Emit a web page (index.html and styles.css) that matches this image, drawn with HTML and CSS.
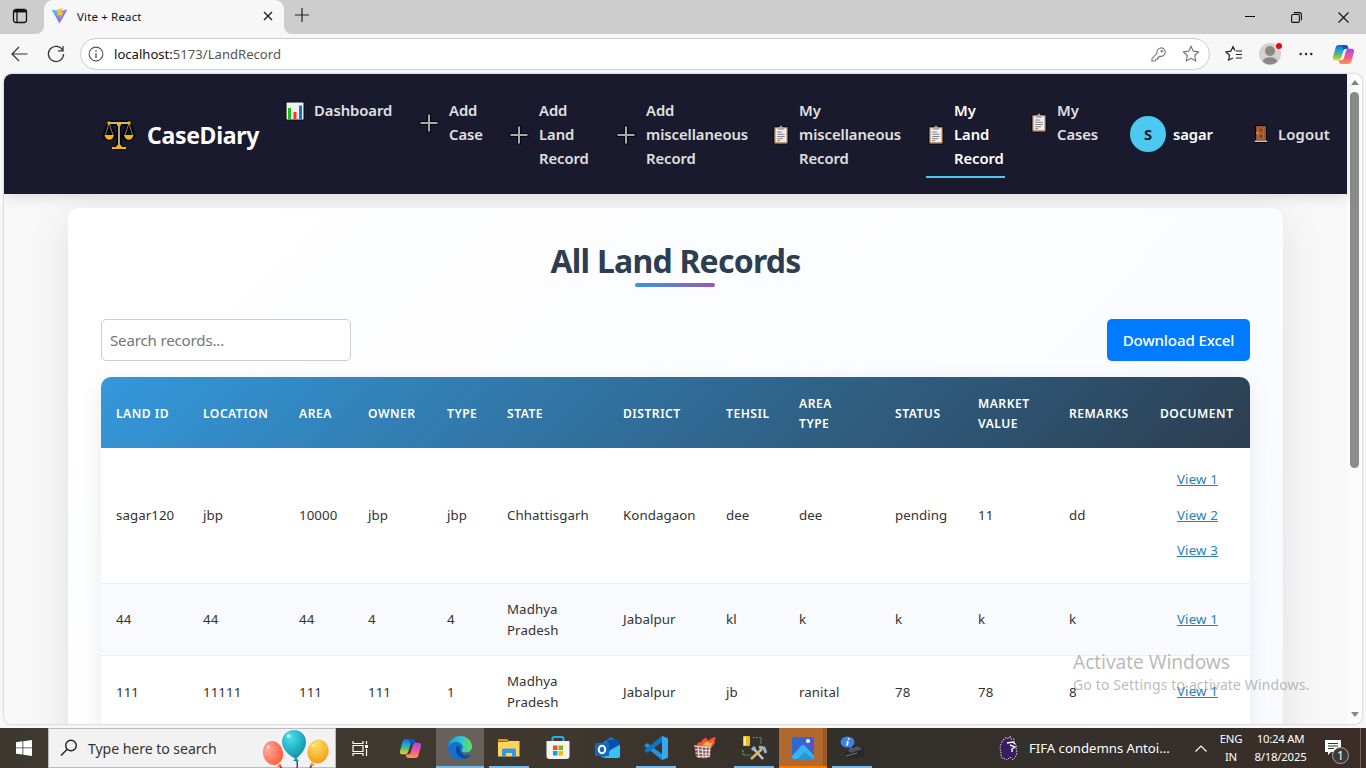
FILE: index.html
```html
<!DOCTYPE html>
<html lang="en">
<head>
<meta charset="utf-8">
<title>Vite + React</title>
<link rel="stylesheet" href="styles.css">
</head>
<body>
<svg width="0" height="0" class="defs">
  <defs>
    <linearGradient id="cpA" x1="0" y1="0" x2="0" y2="1"><stop offset="0" stop-color="#1b62e0"/><stop offset=".35" stop-color="#18a5d8"/><stop offset=".65" stop-color="#5fbf6a"/><stop offset="1" stop-color="#f4d21f"/></linearGradient>
    <linearGradient id="cpB" x1="0" y1="0" x2="0" y2="1"><stop offset="0" stop-color="#a04af0"/><stop offset=".5" stop-color="#f0559a"/><stop offset="1" stop-color="#fb9a45"/></linearGradient>
    <linearGradient id="vt" x1="0" y1="0" x2="1" y2="1"><stop offset="0" stop-color="#41d1ff"/><stop offset="1" stop-color="#bd34fe"/></linearGradient>
    <linearGradient id="edA" x1="0" y1="0" x2="1" y2="0"><stop offset="0" stop-color="#1b9de2"/><stop offset=".55" stop-color="#2fc6cf"/><stop offset="1" stop-color="#6be04f"/></linearGradient>
    <linearGradient id="ph" x1="0" y1="0" x2="1" y2="1"><stop offset="0" stop-color="#1b6fd6"/><stop offset="1" stop-color="#6a4fc4"/></linearGradient>
    <radialGradient id="bR" cx=".3" cy=".3" r=".8"><stop offset="0" stop-color="#ffa9a0"/><stop offset="1" stop-color="#ff5a35"/></radialGradient>
    <radialGradient id="bT" cx=".35" cy=".25" r=".8"><stop offset="0" stop-color="#4be0ee"/><stop offset="1" stop-color="#0a8fa4"/></radialGradient>
    <radialGradient id="bY" cx=".35" cy=".25" r=".8"><stop offset="0" stop-color="#ffe060"/><stop offset="1" stop-color="#f39a1d"/></radialGradient>
    <symbol id="copilot" viewBox="0 0 24 22">
      <path d="M5 1.500Q5.500 1 7 1h7q2 0 2.600 2l.6 2h-2.500q-2.200 0-2.900 2.300L9.600 14.500Q8.800 17 6.500 17H4Q.2 17 1 13.500L3.600 4.200Q4 2.300 5 1.500z" fill="url(#cpA)"/>
      <path d="M7 1h7q2 0 2.600 2l.6 2h-2.500Q13 5 12 6.500L10.800 3Q10 1 7 1z" fill="#1650c8"/>
      <path d="M19 20.500q-.5.500-2 .5h-7q-2 0-2.600-2L6.800 17h2.700q2.200 0 2.900-2.300l2-7.200Q15.200 5 17.500 5H20q3.800 0 3 3.500l-2.600 9.300q-.4 1.900-1.400 2.700z" fill="url(#cpB)"/>
    </symbol>
    <symbol id="plus" viewBox="0 0 20 20"><path d="M10 .500v19M.5 10h19" stroke="#06060c" stroke-width="4.200"/><path d="M10 1.500v17M1.500 10h17" stroke="#aaa" stroke-width="2"/></symbol>
    <symbol id="clip" viewBox="0 0 16 20"><rect x=".4" y="1.200" width="15.200" height="18.300" rx="1.500" fill="#08080c"/><rect x="1.200" y="2" width="13.600" height="16.700" rx="1" fill="#a97848"/><path d="M2.500 3.200h11v14h-11z" fill="#f1f1f3"/><path d="M5 2.200h1.600Q7 .4 8 .4t1.400 1.800H11v2.600H5z" fill="#aaa6a2"/><path d="M4.200 7h5M4.200 9.300h7.500M4.200 11.500h7.500M4.200 13.700h6M4.200 15.700h3" stroke="#77777b" stroke-width=".9"/></symbol>
  </defs>
</svg>

<div class="tabs">
  <div class="tabs-menu"><svg width="16" height="16" viewBox="0 0 16 16" fill="none" stroke="#111" stroke-width="1.300"><rect x="1.500" y="1.500" width="13" height="13" rx="2.500"/><path d="M2 3.200h12" stroke-width="2.500"/><path d="M5 4v10"/></svg></div>
  <div class="tab">
    <svg width="17" height="16" viewBox="0 0 17 16"><path d="M.5 1.500L8.500 15.500 16.500 1.500 8.700 3z" fill="url(#vt)"/><path d="M6.200 1.200l5.600-1-1.600 4.300 2.200-.3-3.600 6.600.5-3.800-2.800.5z" fill="#ffc51f"/></svg>
    <span>Vite + React</span>
    <svg class="tab-x" width="10" height="10" viewBox="0 0 10 10" stroke="#222" stroke-width="1.400"><path d="M1 1l8 8M9 1L1 9"/></svg>
  </div>
  <svg class="tab-new" width="14" height="14" viewBox="0 0 14 14" stroke="#222" stroke-width="1.200"><path d="M7 0v14M0 7h14"/></svg>
  <div class="win">
    <svg width="10" height="10" viewBox="0 0 10 10"><path d="M0 4.500h10" stroke="#000"/></svg>
    <svg width="11" height="11" viewBox="0 0 11 11" fill="none" stroke="#111" stroke-width="1.100"><rect x=".6" y="2.500" width="7.800" height="7.900" rx="1.200"/><path d="M2.800.6h5.500q2.100 0 2.100 2.100v5.500"/></svg>
    <svg width="11" height="11" viewBox="0 0 11 11" stroke="#111" stroke-width="1.100"><path d="M.5.500l10 10M10.500.500l-10 10"/></svg>
  </div>
</div>

<div class="toolbar">
  <svg class="back" width="17" height="16" viewBox="0 0 17 16" fill="none" stroke="#333" stroke-width="1.200"><path d="M8 1L1 8l7 7M1 8h15.500"/></svg>
  <svg class="reload" width="18" height="18" viewBox="0 0 18 18" fill="none" stroke="#333" stroke-width="1.300"><path d="M15.800 5.500A7.600 7.600 0 1 0 16.600 9M16 1v4.800h-5"/></svg>
  <div class="address">
    <svg width="16" height="16" viewBox="0 0 16 16" fill="none" stroke="#555" stroke-width="1.100"><circle cx="8" cy="8" r="6.900"/><path d="M8 7.200V12M8 4.300v1.400" stroke-width="1.400"/></svg>
    <span class="url">localhost:<b>5173/LandRecord</b></span>
    <svg class="key" width="15" height="15" viewBox="0 0 15 15" fill="none" stroke="#777" stroke-width="1.100"><path d="M6 6.300A4.200 4.200 0 1 1 9 9.200L7.800 9.800V11H6.500v1.300H5L4 14H1v-2.600z"/><circle cx="10.800" cy="4.200" r=".7"/></svg>
    <svg class="star" width="18" height="18" viewBox="0 0 18 18" fill="none" stroke="#777" stroke-width="1.200" stroke-linejoin="round"><path d="M9 1.200l2.300 5 5.400.6-4 3.700 1.100 5.500L9 13.300 4.200 16l1.100-5.500-4-3.700 5.400-.6z"/></svg>
  </div>
  <svg class="favs" width="18" height="18" viewBox="0 0 18 18" fill="none" stroke="#222" stroke-width="1.200"><path d="M10 5.800L8 1.700 5.800 6.200 1 7l3.500 3.300L3.600 15 8 13M11 6h6M11 9.500h6M11 13h6"/></svg>
  <div class="profile"><svg width="22" height="22" viewBox="0 0 22 22"><circle cx="11" cy="11" r="11" fill="#d4d1ce"/><circle cx="11" cy="8" r="5" fill="#8a8785"/><path d="M3.500 18.600Q5 14.300 11 14.300t7.500 4.300A11 11 0 0 1 3.500 18.600z" fill="#8a8785"/></svg><i></i></div>
  <svg class="dots" width="14" height="4" viewBox="0 0 14 4" fill="#222"><circle cx="1.700" cy="2" r="1.200"/><circle cx="7" cy="2" r="1.200"/><circle cx="12.300" cy="2" r="1.200"/></svg>
  <svg class="cp" width="23" height="21"><use href="#copilot"/></svg>
</div>

<div class="viewport">
  <div class="page">
    <nav class="nav">
      <div class="brand">
        <svg width="32" height="32" viewBox="0 0 32 32"><g fill="none" stroke="#050508" stroke-width="5" stroke-linejoin="round"><path d="M5 4h22M16 3v25M6 5L2 17h9L6 5M26 5l-5 12h9L26 5M11 29h10"/><path d="M2 17q4 5 9 0M21 17q4 5 9 0"/></g><path d="M16 3v24M6 4h20" stroke="#c5b79c" stroke-width="1.800"/><path d="M6 4L2.500 16M6 4l4 12M26 4l-4 12M26 4l3.500 12" stroke="#999" stroke-width=".8"/><g fill="#fbb300"><path d="M1.500 16h9.500q-1 4.700-4.700 4.700T1.500 16zM21 16h9.500q-1 4.700-4.700 4.700T21 16zM9 30v-2h4q.5-2.500 3-2.500t3 2.500h4v2z"/><circle cx="16" cy="5" r="2.200"/><circle cx="6" cy="4" r="1.700"/><circle cx="26" cy="4" r="1.700"/></g></svg>
        <span>CaseDiary</span>
      </div>
      <div class="menu">
        <a class="item"><svg width="20" height="20" viewBox="0 0 20 20"><rect x=".5" y=".5" width="19" height="19" fill="#08080c"/><rect x="1.500" y="1.500" width="17" height="17" fill="#eef0f2"/><path d="M3 7h3v11H3z" fill="#17c01b"/><path d="M8.500 11h3v7h-3z" fill="#f23a20"/><path d="M14 4.500h3V18h-3z" fill="#1474d4"/></svg><span>Dashboard</span></a>
        <a class="item add"><svg width="20" height="20"><use href="#plus"/></svg><span>Add<br>Case</span></a>
        <a class="item add"><svg width="20" height="20"><use href="#plus"/></svg><span>Add<br>Land<br>Record</span></a>
        <a class="item add"><svg width="20" height="20"><use href="#plus"/></svg><span>Add<br>miscellaneous<br>Record</span></a>
        <a class="item clip"><svg width="16" height="20"><use href="#clip"/></svg><span>My<br>miscellaneous<br>Record</span></a>
        <a class="item clip active"><svg width="16" height="20"><use href="#clip"/></svg><span>My<br>Land<br>Record</span></a>
        <a class="item clip"><svg width="16" height="20"><use href="#clip"/></svg><span>My<br>Cases</span></a>
      </div>
      <div class="user"><div class="avatar">S</div><span>sagar</span></div>
      <div class="logout"><svg width="14" height="18" viewBox="0 0 14 18"><path d="M1 0h12v18H1z" fill="#08080c"/><path d="M2 1h10v14.500H2z" fill="#9a532b"/><path d="M4.500 3h5v4h-5zM4.500 9h5v4.500h-5z" fill="#874722" stroke="#bf7a48" stroke-width=".8"/><circle cx="3.500" cy="8" r=".9" fill="#f2c01f"/><path d="M.8 15.500h12.400V17H.8z" fill="#c8c8c8"/></svg><span>Logout</span></div>
    </nav>
    <main class="card">
      <h1>All Land Records</h1>
      <div class="tools"><input class="search" placeholder="Search records..."><button class="download">Download Excel</button></div>
      <table class="records">
        <colgroup><col class="c1"><col class="c2"><col class="c3"><col class="c4"><col class="c5"><col class="c6"><col class="c7"><col class="c8"><col class="c9"><col class="c10"><col class="c11"><col class="c12"><col class="c13"></colgroup>
        <thead><tr><th>LAND ID</th><th>LOCATION</th><th>AREA</th><th>OWNER</th><th>TYPE</th><th>STATE</th><th>DISTRICT</th><th>TEHSIL</th><th>AREA<br>TYPE</th><th>STATUS</th><th>MARKET<br>VALUE</th><th>REMARKS</th><th>DOCUMENT</th></tr></thead>
        <tbody>
          <tr class="tall"><td>sagar120</td><td>jbp</td><td>10000</td><td>jbp</td><td>jbp</td><td>Chhattisgarh</td><td>Kondagaon</td><td>dee</td><td>dee</td><td>pending</td><td>11</td><td>dd</td><td class="docs"><a>View 1</a><a>View 2</a><a>View 3</a></td></tr>
          <tr class="even"><td>44</td><td>44</td><td>44</td><td>4</td><td>4</td><td>Madhya<br>Pradesh</td><td>Jabalpur</td><td>kl</td><td>k</td><td>k</td><td>k</td><td>k</td><td class="docs"><a>View 1</a></td></tr>
          <tr class="last"><td>111</td><td>11111</td><td>111</td><td>111</td><td>1</td><td>Madhya<br>Pradesh</td><td>Jabalpur</td><td>jb</td><td>ranital</td><td>78</td><td>78</td><td>8</td><td class="docs"><a>View 1</a></td></tr>
        </tbody>
      </table>
    </main>
  </div>
  <div class="scroll"><i class="up"></i><i class="thumb"></i><i class="down"></i></div>
</div>

<div class="watermark"><div class="wm1">Activate Windows</div><div class="wm2">Go to Settings to activate Windows.</div></div>

<div class="taskbar">
  <div class="start"><svg width="16" height="16" viewBox="0 0 16 16" fill="#fff"><path d="M0 2.200l6.500-.9v6.200H0zM7.300 1.200L16 0v7.500H7.300zM0 8.300h6.500v6.300L0 13.700zM7.300 8.300H16V16l-8.700-1.300z"/></svg></div>
  <div class="find">
    <svg width="18" height="18" viewBox="0 0 18 18" fill="none" stroke="#222" stroke-width="1.400"><circle cx="11" cy="6.500" r="5.300"/><path d="M7.200 10.300L1 16.500"/></svg>
    <span>Type here to search</span>
    <svg class="balloons" width="68" height="39" viewBox="0 0 68 39"><g fill="none" stroke="#33207a" stroke-width="1.300"><path d="M17.500 36l2 3M34 30q2 4 1 9M50 35q0 2-2 4"/></g><ellipse cx="11" cy="24" rx="10" ry="12" fill="url(#bR)" transform="rotate(-14 11 24)"/><path d="M15 38l3-3.500 2 3z" fill="#ff5a35"/><path d="M32 1c7 0 12 5 12 12 0 8-6 13-10 17C28 27 20 21 20 13 20 6 25 1 32 1z" fill="url(#bT)"/><path d="M31 32l3-3 3 3z" fill="#0a8fa4"/><ellipse cx="56" cy="22.500" rx="10.500" ry="12" fill="url(#bY)" transform="rotate(16 56 22.500)"/><path d="M47 37l3-4 3 3.500z" fill="#f39a1d"/><g fill="#fff" opacity=".6"><circle cx="6.500" cy="18" r="1.800"/><circle cx="26.500" cy="7" r="2"/><circle cx="51" cy="16.500" r="1.700"/></g></svg>
  </div>
  <div class="apps">
    <div class="app"><svg width="17" height="17" viewBox="0 0 17 17" fill="none" stroke="#fff" stroke-width="1.200"><path d="M1 1v2.500h10V1M1 16v-2.500h10V16M1 5.500h10v6H1zM14.500 1v3M14.500 9v7"/><path d="M13 5h3v3h-3z" fill="#fff" stroke="none"/></svg></div>
    <div class="app copi"><svg width="23" height="21"><use href="#copilot"/></svg></div>
    <div class="app on blue"><svg width="24" height="24" viewBox="0 0 24 24"><circle cx="12" cy="12" r="12" fill="#1470c8"/><path d="M0 11C1 4 6 0 12 0c7 0 12 5 12 10.500 0 4-3 6-6.500 6-2.500 0-4-1-4-2 0-.8 1.200-1.200 1.200-3.300C14.700 8 11 6 8 6 4 6 1 8.500 0 11z" fill="url(#edA)"/><path d="M9 10c-3 5 1 12 7.500 12.500 2.500.2 5-2 6.500-4.500-3.500 2-10.500 1.500-11-4.500-.1-1 .3-2 .3-2S10 9.500 9 10z" fill="#0c4a9a"/><path d="M15.500 16.400q5 1.300 8.500-1.200l-1 2.800q-4 2.500-8 1z" fill="#66615b"/></svg></div>
    <div class="app blue line"><svg width="22" height="18" viewBox="0 0 22 18"><path d="M0 1q0-1 1-1h8l2 2.500H0z" fill="#dd9a0a"/><path d="M0 3h9l2-1h10.500v15.500H0z" fill="#ffd45e"/><path d="M4 18v-7q0-1.500 1.500-1.500h11Q18 9.500 18 11v7h-4v-4H8v4z" fill="#3a96dd"/></svg></div>
    <div class="app"><svg width="24" height="24" viewBox="0 0 24 24"><path d="M6.500 6V2.500Q6.500 1 8 1h8q1.500 0 1.500 1.500V6" fill="none" stroke="#1ab0e8" stroke-width="2"/><path d="M.5 5h23v15q0 3-3 3h-17q-3 0-3-3z" fill="#f3f3f3"/><path d="M7 9.500h4.500V14H7z" fill="#f25022"/><path d="M12.500 9.500H17V14h-4.500z" fill="#7fba00"/><path d="M7 15h4.500v4.500H7z" fill="#00a4ef"/><path d="M12.500 15H17v4.500h-4.500z" fill="#ffb900"/></svg></div>
    <div class="app"><svg width="25" height="22" viewBox="0 0 25 22"><path d="M6 7l9-6.500q1-.7 2 0L25 7v12q0 2-2 2H8q-2 0-2-2z" fill="#1282d8"/><path d="M12 3l10-1 3 5-12 7z" fill="#0c4dab"/><path d="M25 8v11q0 2-2 2H9l7-8z" fill="#3bc0f3"/><path d="M0 6h14v13H0z" fill="#0f68c6"/><ellipse cx="7" cy="12.500" rx="3.200" ry="3.700" fill="none" stroke="#fff" stroke-width="2"/></svg></div>
    <div class="app blue line"><svg width="24" height="24" viewBox="0 0 24 24"><path d="M18 0l6 2.500v19L18 24 0 9.500 3 7l15 11V0z" fill="#2490df"/><path d="M18 6L3 17 0 14.500 18 0z" fill="#0877c4"/><path d="M18 0l6 2.500v19L18 24z" fill="#35a8f3"/></svg></div>
    <div class="app"><svg width="24" height="24" viewBox="0 0 24 24"><path d="M3 12Q4 5 8 6q2-4 6-4-1 3 2 2 3-3 7-3-2 4-1 6-3 3-5 8z" fill="#f4512c"/><path d="M8 11q4-6 8-5-1 3 4-1-1 5-5 8z" fill="#ffb340"/><path d="M1 9l17 1-1 11q-6 3-14 0z" fill="#a5504a"/><path d="M1 10l17 1M2 13.500l15.500 1M2.500 17l15 1M4 20.500h13M5 10l1 12M9 10l1 12M13 10v12M16.500 11l-.5 10" stroke="#ddd" stroke-width="1.200"/></svg></div>
    <div class="app blue line"><svg width="26" height="24" viewBox="0 0 26 24"><path d="M12 1.500h8v6M2 14v5h8" fill="none" stroke="#45b43d" stroke-width="1.200" stroke-dasharray="2 1"/><rect x="2" y="0" width="7" height="10" rx="1" fill="#edbe22"/><path d="M3 1h2v8H3z" fill="#fff0a0"/><path d="M12 12l10 11" stroke="#b9c8d8" stroke-width="2.500"/><path d="M21 13L10 23" stroke="#d8b765" stroke-width="2.500"/><path d="M18 11l5 1 2 5M11 14l3-3" stroke="#9db2cb" stroke-width="3" fill="none"/></svg></div>
    <div class="app orange"><svg width="22" height="22" viewBox="0 0 22 22"><rect width="22" height="22" rx="2.500" fill="url(#ph)"/><path d="M0 19L9.500 8.500q1.500-1.500 3 0L22 18.500V20q0 2-2 2H2q-2 0-2-2z" fill="#35b5ee"/><path d="M5 22l8-7 8 7z" fill="#2595df"/><circle cx="16" cy="4" r="2" fill="#fff"/></svg></div>
    <div class="app blue line"><svg width="24" height="24" viewBox="0 0 24 24"><path d="M5 14l13-5 6 4v7l-13 3-6-4z" fill="#26282c"/><path d="M7 14l11-4 4 3-11 4z" fill="#50545b"/><path d="M6 20l11-3" stroke="#777" stroke-width="1"/><ellipse cx="7.500" cy="6" rx="7" ry="5.500" fill="#3d84e0"/><path d="M7 9l5 5-1-5z" fill="#3d84e0"/><path d="M8.700 2.200v1.600M8 5l-1 4.500" stroke="#fff" stroke-width="1.800"/></svg></div>
  </div>
  <div class="news"><svg width="20" height="24" viewBox="0 0 20 24"><path d="M4 4l2-1 1-2 2 2 2-3 1 3 3 0 0 3 3 5-1 2 1 3-1 4-3 4-3-3-3 3-6-3 0-4-1-5 1-4z" fill="#3c1a64" stroke="#eee" stroke-width=".9" stroke-dasharray="1.500 1.200"/><path d="M8 7l6-1 2 2M11 9l5 2-3 2 0 3" stroke="#fff" stroke-width="1.400" fill="none"/></svg><span>FIFA condemns Antoi...</span></div>
  <svg class="caret" width="12" height="7" viewBox="0 0 12 7" fill="none" stroke="#fff" stroke-width="1.200"><path d="M.5 6.500L6 1l5.500 5.500"/></svg>
  <div class="lang">ENG<br>IN</div>
  <div class="clock">10:24 AM<br>8/18/2025</div>
  <div class="notif"><svg width="16" height="15" viewBox="0 0 16 15"><path d="M0 0h16v12H6l-3 3v-3H0z" fill="#fff"/><path d="M3 3.500h10M3 6h10M3 8.500h6" stroke="#333" stroke-width="1"/></svg><i>1</i></div>
</div>
</body>
</html>
```
FILE: styles.css
```css
* { box-sizing: border-box; }
html, body { margin: 0; height: 768px; overflow: hidden; }
body { display: flex; flex-direction: column; background: #f7f7f7; font-family: "Noto Sans", "Open Sans", sans-serif; color: #222; }
svg { display: block; flex: none; }
.defs { position: absolute; }

.tabs { height: 34px; flex: none; background: linear-gradient(#f7f7f7, #f7f7f7) 0 100% / 300px 9px no-repeat, #cdcdcd; display: flex; align-items: center; }
.tabs-menu { width: 44px; height: 34px; padding: 8px 0 0 12px; border-bottom-right-radius: 8px; background: #cdcdcd; }
.tab { width: 240px; height: 34px; background: #f7f7f7; border-radius: 9px 9px 0 0; display: flex; align-items: center; padding: 0 11px 2px 7px; font-size: 11.5px; letter-spacing: .15px; color: #111; }
.tab span { margin-left: 9px; }
.tab-x { margin-left: auto; }
.tab-new { box-sizing: content-box; padding: 8px 0 12px 11px; }
.tab + .tab-new { background: #cdcdcd; border-bottom-left-radius: 8px; padding-right: 3px; }
.win { margin-left: auto; display: flex; gap: 36px; padding-right: 17px; align-items: center; }

.toolbar { height: 40px; flex: none; background: #f7f7f7; display: flex; align-items: center; padding-left: 11px; }
.reload { margin-left: 19px; }
.address { margin-left: 15px; width: 1130px; height: 32px; border: 1px solid #ccc; border-radius: 16px; background: #fff; display: flex; align-items: center; padding: 0 9px 0 7px; }
.url { margin-left: 10px; font-size: 13.1px; letter-spacing: 0; color: #111; }
.url b { font-weight: 400; color: #555; }
.key { margin-left: auto; }
.star { margin-left: 16px; }
.favs { margin-left: 15px; }
.profile { position: relative; margin-left: 16px; }
.profile i { position: absolute; left: 17px; top: 0; width: 6px; height: 6px; border-radius: 50%; background: #e30b12; }
.dots { margin-left: 18px; }
.cp { margin-left: 19px; }

.viewport { width: 1358px; height: 650px; margin-left: 4px; flex: none; display: flex; border-radius: 8px; overflow: hidden; background: #fff; box-shadow: 0 0 2px #999; }
.page { width: 1343px; flex: none; background: #f8f8f8; }
.nav { position: relative; height: 120px; background: #1a1a2e; display: flex; box-shadow: 0 4px 12px rgba(0,0,0,.1); color: #e0e0e0; font-weight: 600; font-size: 14.8px; line-height: 24px; }
.brand { width: 281px; height: 122px; padding-left: 99px; display: flex; align-items: center; font-size: 23px; font-weight: 700; color: #fff; letter-spacing: -.3px; }
.brand span { margin-left: 12px; }
.menu { display: grid; grid-template-columns: 135px 90px 107px 154px 155px 103px 97px; align-items: start; padding-top: 24px; }
.menu svg { margin-top: 2px; }
.item { display: flex; align-items: center; justify-self: start; gap: 9px; letter-spacing: -.05px; white-space: nowrap; }
.item.add { margin-left: -1px; gap: 10px; }
.item.clip { padding-left: 2px; gap: 10px; }
.active { width: 79px; color: #fff; padding-bottom: 6px; border-bottom: 2px solid #4cc9f0; }
.user { height: 120px; display: flex; align-items: center; margin-left: 4px; color: #fff; width: 124px; letter-spacing: -.1px; }
.avatar { width: 36px; height: 36px; border-radius: 50%; background: #4cc9f0; color: #1a1a2e; display: grid; place-items: center; font-weight: 700; margin-right: 7px; }
.logout { height: 120px; display: flex; align-items: center; gap: 10px; letter-spacing: .15px; }

.card { width: 1215px; height: 700px; margin: 14px 0 0 64px; padding: 33px; border-radius: 12px; background: linear-gradient(135deg, #fff, #f8faff); box-shadow: 0 10px 40px rgba(0,0,0,.1); }
h1 { margin: 0; height: 46px; line-height: 39px; text-align: center; font-size: 32px; font-weight: 700; color: #2c3e50; letter-spacing: -.78px; }
h1::after { content: ""; display: block; width: 80px; height: 4px; margin: 3px 0 0 534px; border-radius: 2px; background: linear-gradient(90deg, #3498db, #9b59b6); }
.tools { display: flex; justify-content: space-between; margin-top: 32px; height: 42px; }
.search { width: 250px; border: 1px solid #ccc; border-radius: 5px; padding: 0 8px; font: 15.1px "Noto Sans", sans-serif; letter-spacing: -.18px; background: #fff; }
.search::placeholder { color: #757575; }
.download { width: 143px; border: 0; border-radius: 5px; background: #007bff; color: #fff; font: 500 15.1px "Noto Sans", sans-serif; letter-spacing: -.12px; padding: 0; white-space: nowrap; }

.records { margin-top: 16px; width: 1149px; table-layout: fixed; border-collapse: separate; border-spacing: 0; border-radius: 10px 10px 0 0; overflow: hidden; background: #fff; box-shadow: 0 5px 20px rgba(0,0,0,.08); }
.c1 { width: 87px; } .c2 { width: 96px; } .c3 { width: 69px; } .c4 { width: 79px; } .c5 { width: 60px; } .c6 { width: 116px; } .c7 { width: 103px; } .c8 { width: 73px; } .c9 { width: 96px; } .c10 { width: 83px; } .c11 { width: 91px; } .c12 { width: 91px; } .c13 { width: 105px; }
thead tr { height: 71px; background: linear-gradient(135deg, #3498db, #2c3e50); }
th { padding: 2px 0 0 15px; text-align: left; font-size: 12.1px; line-height: 20px; font-weight: 600; color: #fff; letter-spacing: .5px; white-space: nowrap; }
td { padding: 0 0 0 15px; font-size: 13.3px; line-height: 21px; color: #333; letter-spacing: .06px; border-bottom: 1px solid #ecf0f1; white-space: nowrap; }
tbody tr { height: 72px; }
tbody .tall { height: 136px; }
.even { background: #f9fafd; }
.last td { padding-top: 1px; }
.docs { padding: 0; text-align: center; letter-spacing: .15px; }
.docs a { display: block; color: #2980b9; text-decoration: underline; line-height: 35.500px; }

.scroll { width: 15px; background: #fcfcfc; display: flex; flex-direction: column; align-items: center; padding: 6px 0 7px 0; }
.up { border: 4.500px solid transparent; border-top: 0; border-bottom: 5px solid #858585; }
.thumb { width: 9px; height: 376px; margin-top: 7px; border-radius: 5px; background: #8b8b8b; }
.down { border: 4.500px solid transparent; border-bottom: 0; border-top: 5px solid #858585; margin-top: auto; }

.watermark { position: absolute; left: 1073px; top: 648px; color: rgba(140,140,140,.6); white-space: nowrap; }
.wm1 { font-size: 19.2px; line-height: 28px; letter-spacing: -.1px; }
.wm2 { font-size: 14px; line-height: 18px; letter-spacing: .13px; }

.taskbar { height: 40px; flex: none; margin-top: 4px; background: linear-gradient(90deg, #3d3931, #40382f 40%, #332f2a 60%, #35302a 85%, #3b2d28); display: flex; align-items: center; color: #fff; }
.start { width: 48px; padding-left: 16px; }
.find { width: 288px; height: 40px; background: #f2f2f2; border: 1px solid #bbb; display: flex; align-items: center; padding-left: 11px; font-size: 14.1px; letter-spacing: -.06px; color: #333; }
.find span { margin-left: 10px; white-space: nowrap; }
.balloons { margin-left: auto; margin-right: 5px; }
.apps { display: flex; width: 663px; gap: 1px; height: 40px; }
.app { width: 48px; height: 40px; display: grid; place-items: center; }
.copi { width: 50px; }
.blue { background: linear-gradient(#76b9ed, #76b9ed) 50% 100% / 40px 2px no-repeat; }
.on { background: linear-gradient(#76b9ed, #76b9ed) 0 100% / 100% 2px no-repeat, #66615b; }
.orange { background: linear-gradient(#ff7800, #ff7800) 0 100% / 100% 2px no-repeat, linear-gradient(90deg, #b06a30 44px, #8b4f26 44px, #9b5a29 45px); }
.news { display: flex; align-items: center; gap: 10px; width: 196px; font-size: 13.2px; white-space: nowrap; letter-spacing: -.03px; }
.caret { margin-right: 5px; }
.lang, .clock { text-align: center; font-size: 11.4px; line-height: 18px; letter-spacing: -.2px; white-space: nowrap; }
.lang { width: 38px; }
.clock { width: 61px; letter-spacing: -.25px; }
.notif { position: relative; margin-left: 14px; width: 36px; height: 40px; padding-top: 12px; border-right: 1px solid #6f655e; }
.notif i { position: absolute; left: 7px; top: 19px; width: 17px; height: 17px; border: 1px solid #aaa; border-radius: 50%; background: #3d3935; font: 12px/15px "Noto Sans", sans-serif; text-align: center; }
```
